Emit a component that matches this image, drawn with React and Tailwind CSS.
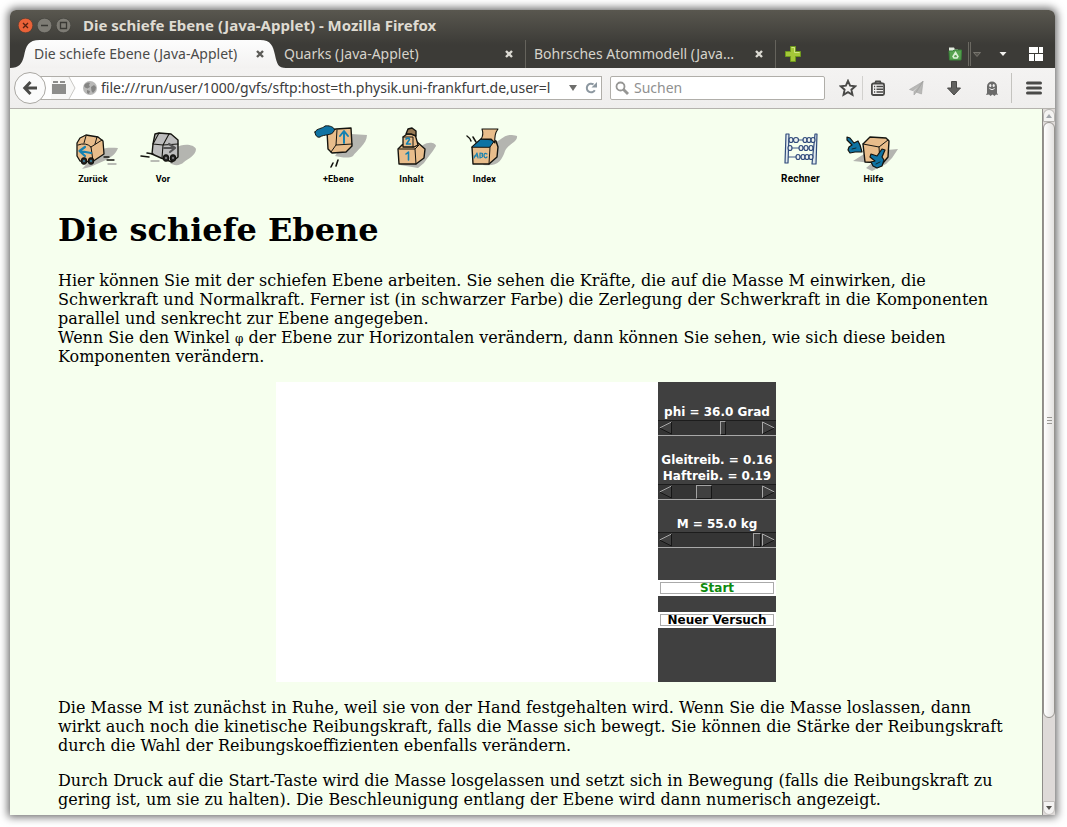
import React, { useState } from "react";

const ui = "font-['Noto_Sans','Open_Sans',sans-serif]";

function CloseX({ className }) {
  return (
    <svg width="8" height="8" viewBox="0 0 8 8" className={className} aria-hidden="true">
      <path d="M1 1L7 7M7 1L1 7" stroke="currentColor" strokeWidth="2.4" />
    </svg>
  );
}

function Tab({ title, active }) {
  return (
    <div className={`relative flex w-[250px] min-w-0 shrink items-center pl-2 ${active ? "" : "border-r border-[#65635c]"}`}>
      {active && (
        <svg
          className="absolute top-0 left-[-16px] h-full w-[276px]"
          viewBox="0 0 276 28"
          preserveAspectRatio="none"
          aria-hidden="true"
        >
          <defs>
            <linearGradient id="tabfill" x1="0" y1="0" x2="0" y2="1">
              <stop offset="0" stopColor="#fdfdfd" />
              <stop offset="1" stopColor="#f3f2f1" />
            </linearGradient>
          </defs>
          <path d="M0 28C9 28 12 24 14 16C16 6 18 0 30 0H250C261 0 263 6 265 15C267 24 268 28 276 28Z" fill="url(#tabfill)" />
        </svg>
      )}
      <button type="button" className={`relative min-w-0 flex-1 truncate text-left text-sm ${active ? "text-[#4b4b49]" : "text-[#d6d3cb]"}`}>
        {title}
      </button>
      <button type="button" aria-label="Tab schließen" className={`relative mr-3 ml-2 ${active ? "text-[#5c5b57]" : "text-[#dcdad3]"}`}>
        <CloseX />
      </button>
    </div>
  );
}

function Toolbar() {
  return (
    <div className="flex h-[41px] shrink-0 items-center border-b border-[#b5b3ae] bg-linear-to-b from-[#f4f3f2] to-[#efeeed]">
      <button
        type="button"
        aria-label="Zurück"
        className="relative z-10 ml-1 flex size-8 shrink-0 items-center justify-center rounded-full border border-[#aaa8a3] bg-[#fbfbfb]"
      >
        <svg width="16" height="16" viewBox="0 0 16 16" fill="none" stroke="#4a4a48" strokeWidth="3" aria-hidden="true">
          <path d="M8.5 2L2.8 8L8.5 14M3 8H15" />
        </svg>
      </button>
      <div className="-ml-2 flex h-6 min-w-0 flex-1 items-center border border-[#b0aea9] bg-white pl-3">
        <svg width="28" height="22" viewBox="0 0 28 22" className="shrink-0" aria-hidden="true">
          <path d="M0 0H18L24 11L18 22H0Z" fill="#f8f8f7" />
          <path d="M18 0L24 11L18 22" fill="none" stroke="#c9c8c5" />
          <path d="M1 7H15V17H1Z" fill="#8d8d8b" />
          <path d="M2 4H7V6H2ZM9 4H14V6H9Z" fill="#8d8d8b" />
        </svg>
        <svg width="14" height="14" viewBox="0 0 14 14" className="ml-1 shrink-0" aria-hidden="true">
          <circle cx="7" cy="7" r="7" fill="#b9b9b8" />
          <path d="M2 3L5 1.500L7 2L6 4L7 6L4.500 7.500L2 6.500L1 5ZM8 6L11 4L13 6L12.500 9L10 12L8.500 10ZM4 9L7 10L6 13L4 12Z" fill="#858584" />
        </svg>
        <input
          aria-label="Adresse"
          defaultValue="file:///run/user/1000/gvfs/sftp:host=th.physik.uni-frankfurt.de,user=l"
          className="ml-1 min-w-0 flex-1 bg-transparent text-sm text-[#3c3c3c] outline-none"
        />
        <svg width="8" height="6" viewBox="0 0 8 6" className="mx-2 shrink-0" aria-hidden="true">
          <path d="M0 0H8L4 6Z" fill="#6e6e6c" />
        </svg>
        <button type="button" aria-label="Neu laden" className="mr-1 shrink-0">
          <svg width="12" height="12" viewBox="0 0 12 12" aria-hidden="true">
            <path d="M8.500 2.400A4.300 4.300 0 1 0 9.800 8.200" fill="none" stroke="#8c97a0" strokeWidth="2" />
            <path d="M12 0V5.500H6.500Z" fill="#8c97a0" />
          </svg>
        </button>
      </div>
      <div className="ml-2 flex h-6 w-[215px] shrink-0 items-center gap-1 rounded-xs border border-[#b0aea9] bg-white pl-1">
        <svg width="15" height="15" viewBox="0 0 15 15" fill="none" stroke="#969694" aria-hidden="true">
          <circle cx="5.500" cy="5.500" r="4" strokeWidth="1.800" />
          <path d="M8.500 8.500L13 13" strokeWidth="2.800" />
        </svg>
        <input aria-label="Suchen" placeholder="Suchen" className="min-w-0 flex-1 text-sm outline-none placeholder:text-[#909090]" />
      </div>
      <button type="button" aria-label="Lesezeichen" className="ml-2 flex h-6 w-[30px] shrink-0 items-center justify-center border-r border-[#d2d1ce]">
        <svg width="18" height="18" viewBox="0 0 18 18" fill="none" stroke="#4a4a48" strokeWidth="1.900" aria-hidden="true">
          <path d="M9 1.800L11.100 6.700L16.300 7.200L12.400 10.700L13.500 15.900L9 13.200L4.500 15.900L5.600 10.700L1.700 7.200L6.900 6.700Z" />
        </svg>
      </button>
      <button type="button" aria-label="Lesezeichen anzeigen" className="flex w-[34px] shrink-0 items-center justify-center pr-1">
        <svg width="16" height="16" viewBox="0 0 16 16" fill="none" stroke="#4a4a48" strokeWidth="1.800" aria-hidden="true">
          <rect x="1.900" y="3.500" width="12.200" height="11.500" rx="1.500" />
          <path d="M5 3.500L6 1.500H10L11 3.500" />
          <path d="M4 6.500H5.200M6.500 6.500H13M4 9.300H5.200M6.500 9.300H13M4 12.100H5.200M6.500 12.100H13" strokeWidth="1.500" />
        </svg>
      </button>
      <button type="button" aria-label="Senden" className="flex w-[38px] shrink-0 items-center justify-center">
        <svg width="15" height="15" viewBox="0 0 15 15" aria-hidden="true">
          <path d="M14 .5L.5 8.500L4 9.700ZM14 .5L5 10.500V14L7 11.700ZM14 .5L7 11L12.500 13Z" fill="#b9b9b7" stroke="#a3a3a1" strokeWidth=".6" />
        </svg>
      </button>
      <button type="button" aria-label="Downloads" className="flex w-[38px] shrink-0 items-center justify-center">
        <svg width="14" height="15" viewBox="0 0 14 15" aria-hidden="true">
          <path d="M4.500 .5H9.500V7H13.500L7 14L.5 7H4.500Z" fill="#626260" stroke="#4a4a48" />
        </svg>
      </button>
      <button type="button" aria-label="Ghostery" className="flex w-[38px] shrink-0 items-center justify-center">
        <svg width="14" height="15" viewBox="0 0 14 15" aria-hidden="true">
          <path d="M2 12V5.500A5 5 0 0 1 12 5.500V12L13 14L11 13.500L9.500 15L7.500 13.500L5.500 15L4 13.500L1 14Z" fill="#6b6b6a" />
          <ellipse cx="5.300" cy="4.500" rx="1.100" ry="1.500" fill="#f1f0ef" />
          <ellipse cx="8.700" cy="4.500" rx="1.100" ry="1.500" fill="#f1f0ef" />
          <path d="M4.300 7.500Q7 10 9.700 7.500" fill="none" stroke="#f1f0ef" />
        </svg>
      </button>
      <button type="button" aria-label="Menü" className="flex h-[30px] w-11 shrink-0 items-center justify-center border-l border-[#c4c3bf]">
        <svg width="16" height="14" viewBox="0 0 16 14" stroke="#4a4a48" strokeWidth="3" strokeLinecap="round" aria-hidden="true">
          <path d="M1.500 2H14.500M1.500 7H14.500M1.500 12H14.500" />
        </svg>
      </button>
    </div>
  );
}

const ink = "#14140f";
const box = "#e8bd8b";
const blue = "#0f73a3";
const gray = "#b4b5b0";

function NavLink({ label, width = "w-[73px]", size = "text-[9px]", view, children }) {
  return (
    <a href="#" className={`flex flex-col items-center ${width}`}>
      <svg viewBox={view} className="h-[50px] w-full overflow-visible" strokeLinejoin="round" strokeLinecap="round" aria-hidden="true">
        {children}
      </svg>
      <span className={`font-['Roboto',sans-serif] leading-[14px] font-bold tracking-wide whitespace-nowrap text-black ${size}`}>{label}</span>
    </a>
  );
}

function Wheels({ x, y, hub }) {
  return (
    <g stroke={ink} strokeWidth="1.200">
      <ellipse cx={x} cy={y} rx="2.600" ry="3.200" fill="#28282a" />
      <ellipse cx={x + 7} cy={y} rx="2.600" ry="3.200" fill="#28282a" />
      <circle cx={x} cy={y} r="1.100" fill={hub} stroke="none" />
      <circle cx={x + 7} cy={y} r="1.100" fill={hub} stroke="none" />
    </g>
  );
}

function NavBar() {
  return (
    <nav className="flex pt-[13px]">
      <NavLink label="Zurück" width="w-[70px]" view="58 122 70 50">
        <path d="M100 150C106 147 112 148 118 148C116 154 111 157 106 160L90 167L82 169Z" fill={gray} />
        <path d="M77 143L80 138L86 135L98 137L103 141L104 154L92 162L80 161L77 156Z" fill={box} stroke={ink} strokeWidth="1.300" />
        <path d="M78 145Q86 142 91 147L93 161M91 147L102 140M86 136L84 143M97 137L95 144" fill="none" stroke={ink} />
        <path d="M91 153L80 151M85 147L79.500 151L85 156" fill="none" stroke="#1682b1" strokeWidth="2.200" />
        <path d="M104 157H109M107 160L114 160" stroke={ink} strokeWidth="1.300" fill="none" />
        <path d="M108 164H116" stroke="#a5a6a2" strokeWidth="1.300" />
        <Wheels x={84} y={161} hub="#3d86a0" />
      </NavLink>
      <NavLink label="Vor" width="w-[70px]" view="128 122 70 50">
        <path d="M176 148C182 143 194 144 196 149C196 155 188 159 184 162C180 166 174 166 170 163Z" fill={gray} />
        <path d="M155 134L159 133L171 134L178 140L178 157L172 162L161 158L152 154L153 144Z" fill="#bdbdbd" stroke={ink} strokeWidth="1.400" />
        <path d="M153 144L163 145L178 144M163 145L162 158M169 134L163 145M159 133L153 144" fill="none" stroke={ink} strokeWidth="1.100" />
        <path d="M164 148L174 148M169 144L175 148L170 152" fill="none" stroke="#555" strokeWidth="2.200" />
        <path d="M147 153L153 154M141 156L149 157" stroke={ink} strokeWidth="1.500" fill="none" />
        <path d="M151 161L159 161" stroke="#a5a6a2" strokeWidth="1.300" />
        <Wheels x={166} y={158} hub="#8b8b8b" />
      </NavLink>
      <div className="ml-[104px] flex">
        <NavLink label="+Ebene" view="302 122 73 50">
          <path d="M351 134L367 135C367 144 356 151 353 156C349 159 340 157 335 156Z" fill={gray} />
          <path d="M327 131L336 129L351 128L352 146L346 152L332 153L328 149Z" fill={box} stroke={ink} strokeWidth="1.400" />
          <path d="M337 130L336 145L352 144M336 145L331 152" fill="none" stroke={ink} />
          <path d="M344 143V132M340 136L344 131L348 136" fill="none" stroke="#1682b1" strokeWidth="2" />
          <path d="M315 132C317 128 322 129 325 126C330 125 336 128 334 131C332 136 324 134 320 137C317 138 315 135 315 132Z" fill={blue} stroke={ink} />
          <path d="M333 163L331 167M338 160L336 166" stroke={ink} strokeWidth="1.600" fill="none" />
        </NavLink>
        <NavLink label="Inhalt" view="375 122 73 50">
          <path d="M423 145C429 141 436 143 436 146C432 153 427 158 424 163L418 168L400 165Z" fill={gray} />
          <path d="M398 149L402 145L416 141L425 149L424 158L416 164H399Z" fill={box} stroke={ink} strokeWidth="1.400" />
          <path d="M399 149H415L419 145M415 149L416 164" fill="none" stroke={ink} />
          <path d="M403 137L407 134L415 134L418 145L414 147H403Z" fill={box} stroke={ink} strokeWidth="1.300" />
          <path d="M403 137H413V147" fill="none" stroke={ink} />
          <path d="M406 134L408 129L412 128L416 131V136L411 134Z" fill="#987a54" stroke={ink} strokeWidth="1.400" />
          <path d="M406 154L408.500 152V160M406 139Q409 137 409.500 139.500L406.500 144H410.500" fill="none" stroke="#1682b1" strokeWidth="1.600" />
        </NavLink>
        <NavLink label="Index" view="448 122 73 50">
          <path d="M496 142C505 137 506 133 517 136C518 142 508 144 505 151C502 160 498 167 483 165Z" fill={gray} />
          <path d="M472 147L481 139L496 141L498 147L497 157L489 164H473Z" fill={box} stroke={ink} strokeWidth="1.400" />
          <path d="M472 147L481 139L495 140L490 147Z" fill={blue} stroke={ink} />
          <path d="M481 139Q484 135 482 129H498Q494 134 495 143L491 139Z" fill={box} stroke={ink} strokeWidth="1.100" />
          <path d="M490 147L489 164" stroke={ink} />
          <path d="M467 136Q470 138 471 141M473 137L476 142" fill="none" stroke={ink} strokeWidth="1.500" />
          <path d="M474 158L477 153L478 158M474 156H478M480 153V158Q484 157 482 155Q484 153 480 153M487 154Q484 152 484 156Q485 159 487 157" fill="none" stroke="#1682b1" strokeWidth="1.200" />
        </NavLink>
      </div>
      <div className="ml-[243px] flex">
        <NavLink label="Rechner" size="text-[10px]" view="764 122 73 50">
          <path d="M789 140L816 140M789 148H814M788 157H814" stroke="#3e5888" strokeWidth="1.200" />
          <path d="M786 134H789L788 163H785ZM815 134H817L816 164H812Z" fill="#dfe8ed" stroke="#304b7b" strokeWidth="1.200" />
          <g fill="#eef3ef" stroke="#304b7b" strokeWidth="1.200">
            <ellipse cx="791" cy="140" rx="2" ry="2.500" /><ellipse cx="796" cy="140" rx="2.500" ry="2.500" />
            <ellipse cx="805" cy="140" rx="2" ry="2.500" /><ellipse cx="809" cy="140" rx="2" ry="2.500" /><ellipse cx="813" cy="140" rx="2" ry="2.500" />
            <ellipse cx="790" cy="148" rx="2" ry="2.500" /><ellipse cx="801" cy="148" rx="2" ry="2.500" /><ellipse cx="806" cy="148" rx="2" ry="2.500" /><ellipse cx="811" cy="148" rx="2" ry="2.500" />
            <ellipse cx="798" cy="157" rx="2" ry="2.500" /><ellipse cx="803" cy="157" rx="2" ry="2.500" /><ellipse cx="807" cy="157" rx="2" ry="2.500" /><ellipse cx="811" cy="157" rx="2" ry="2.500" />
          </g>
        </NavLink>
        <NavLink label="Hilfe" view="837 122 73 50">
          <path d="M887 150L898 149L892 158L886 164L872 171L866 168L872 163L853 161L864 154Z" fill={gray} />
          <path d="M863 144L870 137L886 138L889 141L888 157L883 163L865 162Z" fill={box} stroke={ink} strokeWidth="1.400" />
          <path d="M863 144L879 147L888 140M879 147L880 162" fill="none" stroke={ink} />
          <path d="M847 137L850 138L854 143L858 141L860 145L862 152L855 152L850 153L848 150L849 147L852 145L847 140Z" fill={blue} stroke={ink} strokeWidth="1.200" />
          <path d="M871 154L877 156L882 149L885 150L882 157L884 160L882 166L877 168L873 166L871 162L875 161L870 157Z" fill={blue} stroke={ink} strokeWidth="1.200" />
          <path d="M852 149L856 148M876 164L880 162" stroke={ink} strokeWidth=".8" />
        </NavLink>
      </div>
    </nav>
  );
}

const thumbBase =
  "h-4 w-[90px] appearance-none bg-[#353535] outline-none [&::-webkit-slider-thumb]:h-[14px] [&::-webkit-slider-thumb]:appearance-none [&::-webkit-slider-thumb]:border [&::-webkit-slider-thumb]:border-t-[#a3a3a3] [&::-webkit-slider-thumb]:border-l-[#a3a3a3] [&::-webkit-slider-thumb]:border-r-[#161616] [&::-webkit-slider-thumb]:border-b-[#161616] [&::-webkit-slider-thumb]:bg-[#404040]";

function Scroller({ id, value, onChange, max, step, thumb }) {
  const move = (d) => onChange(Math.min(max, Math.max(0, value + d)));
  return (
    <div className="flex h-4 justify-center border-t border-b border-t-[#1c1c1c] border-b-[#a8a8a8] bg-[#353535]">
      <button type="button" aria-label="Weniger" onClick={() => move(-step)}>
        <svg width="13" height="14" viewBox="0 0 13 14" fill="#404040" aria-hidden="true">
          <path d="M12.500 1L.5 7L12.500 13Z" />
          <path d="M12.500 1L.5 7" stroke="#a8a8a8" />
          <path d="M.5 7L12.500 13V1" fill="none" stroke="#161616" />
        </svg>
      </button>
      <input
        id={id}
        type="range"
        min="0"
        max={max}
        step={step}
        value={value}
        onChange={(e) => onChange(Number(e.target.value))}
        className={`${thumbBase} ${thumb} max-h-full`}
      />
      <button type="button" aria-label="Mehr" onClick={() => move(step)}>
        <svg width="13" height="14" viewBox="0 0 13 14" fill="#404040" aria-hidden="true">
          <path d="M.5 1L12.500 7L.5 13Z" />
          <path d="M.5 13V1L12.500 7" fill="none" stroke="#a8a8a8" />
          <path d="M12.500 7L.5 13" stroke="#161616" />
        </svg>
      </button>
    </div>
  );
}

function Applet() {
  const [phi, setPhi] = useState(36);
  const [mu, setMu] = useState(0.16);
  const [mass, setMass] = useState(55);
  return (
    <div className="mx-auto my-4 flex h-[300px] w-[500px]">
      <div className="flex-1 bg-white" />
      <div className="flex w-[118px] flex-col bg-[#404040] pt-[22px] text-center font-['DejaVu_Sans',sans-serif] text-xs leading-4 font-bold whitespace-nowrap text-white">
        <label htmlFor="phi">phi = {phi.toFixed(1)} Grad</label>
        <Scroller id="phi" value={phi} onChange={setPhi} max={63} step={0.5} thumb="[&::-webkit-slider-thumb]:w-[6px]" />
        <label htmlFor="mu" className="mt-4">
          Gleitreib. = {mu.toFixed(2)}
          <br />
          Haftreib. = {(mu + 0.03).toFixed(2)}
        </label>
        <Scroller id="mu" value={mu} onChange={setMu} max={0.49} step={0.01} thumb="[&::-webkit-slider-thumb]:w-4" />
        <label htmlFor="mass" className="mt-4">M = {mass.toFixed(1)} kg</label>
        <Scroller id="mass" value={mass} onChange={setMass} max={56} step={0.5} thumb="[&::-webkit-slider-thumb]:w-2" />
        <div className="mt-8 bg-white p-[2px]">
          <button type="button" className="flex h-3 w-full items-center justify-center border border-[#aaaaaa] bg-white leading-[14px] text-[#0e8a0e]">Start</button>
        </div>
        <div className="mt-4 bg-white p-[2px]">
          <button type="button" className="flex h-3 w-full items-center justify-center border border-[#aaaaaa] bg-white leading-[14px] text-black">Neuer Versuch</button>
        </div>
      </div>
    </div>
  );
}

function ScrollBar() {
  return (
    <div className="flex w-[13px] shrink-0 flex-col border-l border-[#8e8c88] bg-[#dedad8]" aria-hidden="true">
      <div className="flex h-[13px] items-center justify-center rounded-t-full border border-[#b5b3af] bg-[#f4f3f2]">
        <svg width="6" height="4" viewBox="0 0 6 4"><path d="M0 4L3 0L6 4Z" fill="#a2a6ab" /></svg>
      </div>
      <div className="flex flex-[597] items-center justify-center rounded-full border border-[#96938f] bg-linear-to-r from-white to-[#e4e2e0]">
        <svg width="5" height="9" viewBox="0 0 5 9" stroke="#9b9995"><path d="M0 1.500H5M0 4.500H5M0 7.500H5" /></svg>
      </div>
      <div className="flex-[83]" />
      <div className="flex h-[14px] items-center justify-center rounded-b-full border border-[#c2bfbc] bg-[#f4f3f2]">
        <svg width="6" height="4" viewBox="0 0 6 4"><path d="M0 0L3 4L6 0Z" fill="#55534f" /></svg>
      </div>
    </div>
  );
}

export default function App() {
  return (
    <div className={`h-screen bg-white pt-[10px] pr-3 pb-3 pl-[10px] ${ui}`}>
      <div className="flex h-full flex-col overflow-hidden rounded-t-md shadow-[0_0_8px_2px_rgba(0,0,0,0.6)]">
        <div className="shrink-0 bg-linear-to-b from-[#59574f] to-[#3c3b37] to-60%">
          <header className="flex h-[30px] items-center gap-1 pl-2">
            <button type="button" aria-label="Schließen" className="size-[15px]">
              <svg viewBox="0 0 15 15" aria-hidden="true">
                <circle cx="7.500" cy="7.500" r="7.300" fill="#ea6238" stroke="#33322e" strokeWidth=".5" />
                <path d="M5 5L10 10M10 5L5 10" stroke="#542111" strokeWidth="1.300" />
              </svg>
            </button>
            <button type="button" aria-label="Minimieren" className="size-[15px]">
              <svg viewBox="0 0 15 15" aria-hidden="true">
                <circle cx="7.500" cy="7.500" r="7.300" fill="#7e7c75" stroke="#33322e" strokeWidth=".5" />
                <path d="M4 7.500H11" stroke="#393834" strokeWidth="1.300" />
              </svg>
            </button>
            <button type="button" aria-label="Maximieren" className="size-[15px]">
              <svg viewBox="0 0 15 15" aria-hidden="true">
                <circle cx="7.500" cy="7.500" r="7.300" fill="#7e7c75" stroke="#33322e" strokeWidth=".5" />
                <path d="M4.500 4.500H10.500V10.500H4.500Z" fill="none" stroke="#393834" strokeWidth="1.300" />
              </svg>
            </button>
            <span className="ml-2 text-[15px] leading-5 font-bold text-[#dfdbd2]">Die schiefe Ebene (Java-Applet) - Mozilla Firefox</span>
          </header>
          <div className="flex h-7 pl-4">
            <Tab title="Die schiefe Ebene (Java-Applet)" active />
            <Tab title="Quarks (Java-Applet)" />
            <Tab title="Bohrsches Atommodell (Java…" />
            <button type="button" aria-label="Neuer Tab" className="px-[9px]">
              <svg width="16" height="16" viewBox="0 0 16 16" aria-hidden="true">
                <path d="M5.500 .5H10.500V5.500H15.500V10.500H10.500V15.500H5.500V10.500H.5V5.500H5.500Z" fill="#a4c838" stroke="#6f9a1d" />
                <path d="M6.500 1.500H9.500V6.500H14.500" fill="none" stroke="#d1e784" />
              </svg>
            </button>
            <div className="ml-auto flex items-center">
              <button type="button" aria-label="Ordner">
                <svg width="14" height="14" viewBox="0 0 14 14" aria-hidden="true">
                  <path d="M1 .5H6L7 2.500H10V6H1Z" fill="#e4eee1" />
                  <path d="M1 4H5L6 3H13.500L13 13H1.500Z" fill="#57a350" stroke="#3a823a" />
                  <path d="M7.500 5.500L10 9.500L9 11H6L5 9.500Z" fill="none" stroke="#dcf0d7" strokeWidth="1.500" />
                </svg>
              </button>
              <div className="ml-[6px] h-6 w-[3px] border-x border-[#6b6962]" />
              <svg width="8" height="5" viewBox="0 0 8 5" className="mx-[2px]" aria-hidden="true"><path d="M.5 .5H7.500L4 4.500Z" fill="#55534d" stroke="#77756e" /></svg>
              <button type="button" aria-label="Tabs auflisten" className="mr-[18px] ml-4">
                <svg width="8" height="5" viewBox="0 0 8 5" aria-hidden="true"><path d="M.5 0H7.500L4 4Z" fill="#f3f2ef" /></svg>
              </button>
              <button type="button" aria-label="Tab-Gruppen" className="mr-3 ml-1">
                <svg width="14" height="14" viewBox="0 0 14 14" fill="#fff" aria-hidden="true">
                  <path d="M0 0H9V6H0ZM10 0H14V6H10ZM0 7H5V14H0ZM6 7H14V14H6Z" />
                </svg>
              </button>
            </div>
          </div>
        </div>
        <Toolbar />
        <div className="flex min-h-0 flex-1 bg-[#f6ffee]">
          <main className="min-w-0 flex-1 overflow-hidden px-12 font-['DejaVu_Serif',serif] text-base leading-[19px] text-black">
            <NavBar />
            <h1 className="mt-[26px] mb-[22px] text-[32px] leading-[37px] font-bold">Die schiefe Ebene</h1>
            <p className="-mr-4">
              Hier können Sie mit der schiefen Ebene arbeiten. Sie sehen die Kräfte, die auf die Masse M einwirken, die
              Schwerkraft und Normalkraft. Ferner ist (in schwarzer Farbe) die Zerlegung der Schwerkraft in die Komponenten
              parallel und senkrecht zur Ebene angegeben.
              <br />
              Wenn Sie den Winkel <span className="text-xs leading-3">φ</span> der Ebene zur Horizontalen verändern, dann können
              Sie sehen, wie sich diese beiden Komponenten verändern.
            </p>
            <Applet />
            <p className="-mr-4 mb-4">
              Die Masse M ist zunächst in Ruhe, weil sie von der Hand festgehalten wird. Wenn Sie die Masse loslassen, dann
              wirkt auch noch die kinetische Reibungskraft, falls die Masse sich bewegt. Sie können die Stärke der
              Reibungskraft durch die Wahl der Reibungskoeffizienten ebenfalls verändern.
            </p>
            <p className="-mr-4">
              Durch Druck auf die Start-Taste wird die Masse losgelassen und setzt sich in Bewegung (falls die Reibungskraft zu
              gering ist, um sie zu halten). Die Beschleunigung entlang der Ebene wird dann numerisch angezeigt.
            </p>
          </main>
          <ScrollBar />
        </div>
      </div>
    </div>
  );
}
